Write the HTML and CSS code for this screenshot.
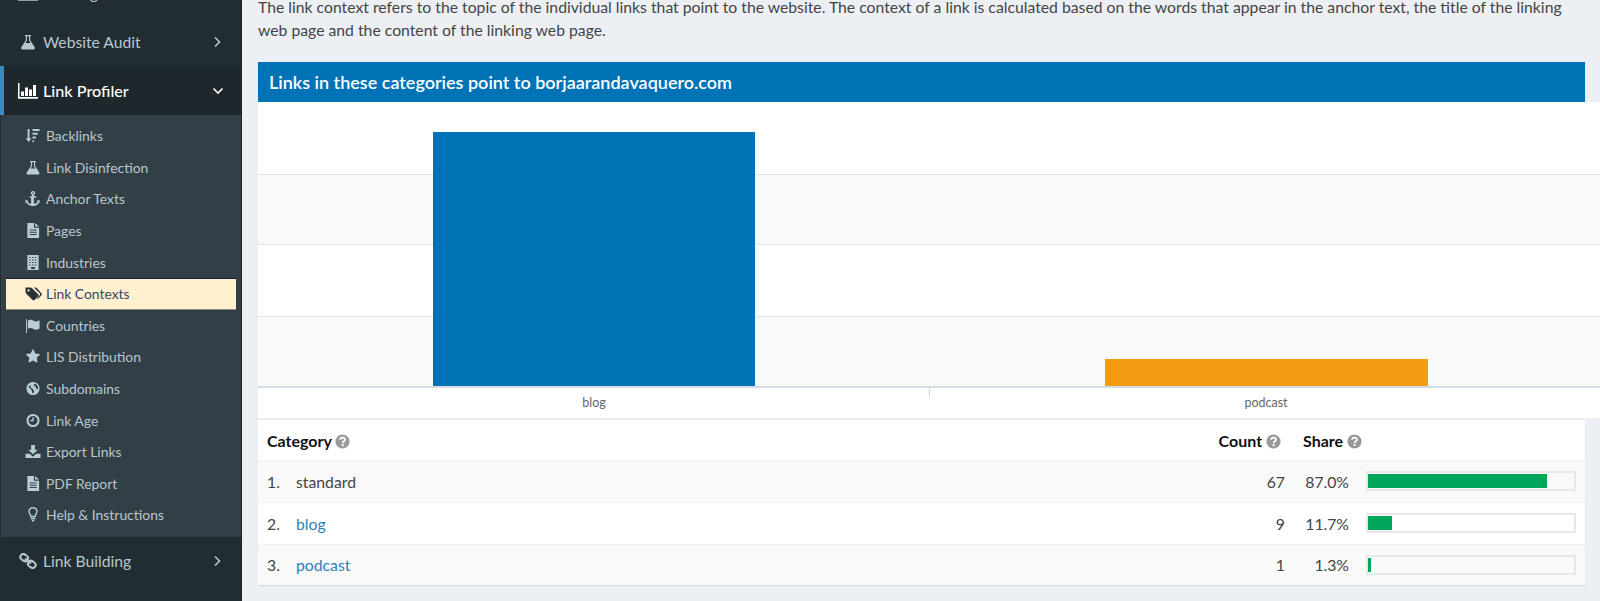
FILE: index.html
```html
<!DOCTYPE html>
<html lang="en">
<head>
    <meta charset="UTF-8">
    <title>Link Contexts</title>
    <link rel="stylesheet" href="styles.css">
</head>
<body>
    <svg class="sprite" width="0" height="0">
        <symbol id="i-flask" viewBox="0 0 16 16"><path fill-rule="evenodd" d="M5 1h6v1.300h-.8v4l4.500 6.900c.6 1 0 2.300-1.200 2.300H2.500c-1.200 0-1.800-1.300-1.200-2.300l4.500-6.900v-4H5zM7 2.300v4.300L5.500 9h5L9 6.600V2.300z"/></symbol>
        <symbol id="i-chart" viewBox="0 0 20 16"><path d="M0 0h1.500v14H20v1.800H0z"/><path d="M3 8.500h3v4.500H3zM7 4.500h3V13H7zM11 6.500h3V13h-3zM15 2h3v11h-3z"/></symbol>
        <symbol id="i-sort" viewBox="0 0 16 16"><path d="M2.300 1h2v10h2L3.300 15 .3 11h2zM7.500 1H15v2.300H7.500zM7.500 5h5.500v2.300H7.500zM7.500 9h3.500v2.300H7.500zM7.500 13H9v2.300H7.500z"/></symbol>
        <symbol id="i-anchor" viewBox="0 0 16 16"><path fill-rule="evenodd" d="M8 0a2.200 2.200 0 0 1 1 4.200V5.500h2.500v1.600H9v6.600c1.700-.2 3.200-1 3.800-2.200l-1.100-.8 3.300-1.300v3.700l-1-.8C13.900 14.500 11.200 16 8 16s-5.900-1.500-7-3.700l-1 .8V9.400l3.300 1.300-1.100.8c.6 1.200 2.100 2 3.800 2.200V7.100H4.500V5.500H7V4.200A2.200 2.200 0 0 1 8 0zm0 1.400a.8.800 0 1 0 0 1.600.8.800 0 0 0 0-1.600z"/></symbol>
        <symbol id="i-file-text" viewBox="0 0 16 16"><path fill-rule="evenodd" d="M2 0h7v5h5.500v11H2zM10.200 0l4.300 3.800h-4.300zM4.500 7v1.100h7.500V7zM4.500 9.400v1.100h7.500V9.400zM4.500 11.800v1.100h7.500v-1.100z"/></symbol>
        <symbol id="i-building" viewBox="0 0 16 16"><path fill-rule="evenodd" d="M2 0h12v16H2zM4 2v1.200h1.500V2zM7 2v1.200h1.500V2zM10 2v1.200h1.500V2zM4 4.700v1.200h1.500V4.700zM7 4.700v1.200h1.500V4.700zM10 4.700v1.200h1.500V4.700zM4 7.400v1.200h1.500V7.400zM7 7.400v1.200h1.500V7.400zM10 7.400v1.200h1.500V7.400zM4 10.100v1.200h1.500v-1.200zM7 10.100v1.200h1.500v-1.200zM10 10.100v1.200h1.500v-1.200zM6 12.800V15h4v-2.200z"/></symbol>
        <symbol id="i-tags" viewBox="0 0 18 16"><path fill-rule="evenodd" d="M.5 1.500h5.300c.6 0 1.200.3 1.700.8l6.500 6.500c.6.600.6 1.500 0 2.100l-3.900 3.900c-.6.600-1.500.6-2.100 0L1.300 8.200C.8 7.700.5 7 .5 6.500zM3.700 3.500a1.200 1.200 0 1 0 0 2.400 1.200 1.200 0 0 0 0-2.400z"/><path d="M9.200 1.500h1.700c.5 0 1.200.3 1.600.7l5 5.600c.6.700.6 1.500 0 2.100l-3.900 4-.9-.9 3.400-3.700c.3-.3.3-.7 0-1L10 2.200c-.2-.3-.5-.7-.8-.7z"/></symbol>
        <symbol id="i-flag" viewBox="0 0 16 16"><path d="M.5 1h1v15h-1zM2.500 3c2-1.700 4-1.200 6 0 2 1 3.700 1.100 6.500-.5v8.700c-2.800 1.700-4.500 1.500-6.500.4-2-1.100-4-1.500-6 .2z"/></symbol>
        <symbol id="i-star" viewBox="0 0 1792 1792"><path d="M1728 647q0 22-26 48l-363 354 86 500q1 7 1 20 0 21-10.500 35.500t-30.500 14.500q-19 0-40-12l-449-236-449 236q-22 12-40 12-21 0-31.500-14.500t-10.500-35.500q0-6 2-20l86-500-364-354q-25-27-25-48 0-37 56-46l502-73 225-455q19-41 49-41t49 41l225 455 502 73q56 9 56 46z"/></symbol>
        <symbol id="i-globe" viewBox="0 0 16 16"><path fill-rule="evenodd" d="M8 1a7 7 0 1 1 0 14A7 7 0 0 1 8 1zM5 4.500L3 6.500l2.200 1.700 1.500 2 .8 3 1.300-.5.200-2.500-2-2.500-1.800-.5.500-1.500zM9.500 3l-1 1.500 2 1 .5 2 2 1.500.5-2-1.500-3z"/></symbol>
        <symbol id="i-clock" viewBox="0 0 16 16"><path fill-rule="evenodd" d="M8 1a7 7 0 1 1 0 14A7 7 0 0 1 8 1zm0 2.200a4.800 4.800 0 1 0 0 9.600 4.800 4.800 0 0 0 0-9.600zM7.300 4.500h1.400v4.300H5V7.500h2.300z"/></symbol>
        <symbol id="i-download" viewBox="0 0 16 16"><path d="M6 1h4v5h3l-5 5-5-5h3z"/><path d="M0 10.500h4.500L8 13.500l3.500-3H16V15H0z"/></symbol>
        <symbol id="i-bulb" viewBox="0 0 16 16"><path fill-rule="evenodd" d="M8 0c2.900 0 5 2 5 4.800 0 2.500-1.800 3.500-2.200 6H5.200C4.800 8.300 3 7.300 3 4.800 3 2 5.100 0 8 0zm0 1.500c-2 0-3.500 1.300-3.500 3.300 0 1.700 1.300 2.500 1.900 4.600h3.200c.6-2.100 1.900-2.900 1.900-4.600 0-2-1.500-3.300-3.500-3.300zM5.500 11.500h5V13h-5zM6.300 13.700h3.400L8.800 15.500H7.200z"/></symbol>
        <symbol id="i-link" viewBox="0 0 18 16"><g fill="none" stroke="currentColor" stroke-width="2"><rect x="1.200" y="1.600" width="8" height="6" rx="3" transform="rotate(35 5.200 4.600)"/><rect x="8.800" y="8.400" width="8" height="6" rx="3" transform="rotate(35 12.800 11.400)"/><path d="M6 5.500l6 5"/></g></symbol>
        <symbol id="i-help" viewBox="0 0 16 16"><circle cx="8" cy="8" r="7.500"/><path d="M5.500 6.200c0-1.500 1.100-2.300 2.500-2.300s2.600.8 2.600 2.100c0 1.800-2.400 1.800-2.400 3.600" fill="none" stroke="#fff" stroke-width="1.900"/><path d="M7 10.700h2.300v2H7z" fill="#fff"/></symbol>
    </svg>

    <div class="app">
        <aside class="sidebar">
            <a class="nav-item clipped"><svg class="nav-icon"><use href="#i-chart"/></svg>Rankings</a>
            <a class="nav-item"><svg class="nav-icon"><use href="#i-flask"/></svg>Website Audit
                <svg class="chevron" viewBox="0 0 10 12"><path d="M3 1.500L7.500 6 3 10.500"/></svg></a>
            <a class="nav-item active"><svg class="nav-icon"><use href="#i-chart"/></svg>Link Profiler
                <svg class="chevron" viewBox="0 0 12 10"><path d="M1.500 2.500L6 7l4.500-4.500"/></svg></a>
            <ul class="submenu">
                <li><svg><use href="#i-sort"/></svg>Backlinks</li>
                <li><svg><use href="#i-flask"/></svg>Link Disinfection</li>
                <li><svg><use href="#i-anchor"/></svg>Anchor Texts</li>
                <li><svg><use href="#i-file-text"/></svg>Pages</li>
                <li><svg><use href="#i-building"/></svg>Industries</li>
                <li class="current"><svg><use href="#i-tags"/></svg>Link Contexts</li>
                <li><svg><use href="#i-flag"/></svg>Countries</li>
                <li><svg><use href="#i-star"/></svg>LIS Distribution</li>
                <li><svg><use href="#i-globe"/></svg>Subdomains</li>
                <li><svg><use href="#i-clock"/></svg>Link Age</li>
                <li><svg><use href="#i-download"/></svg>Export Links</li>
                <li><svg><use href="#i-file-text"/></svg>PDF Report</li>
                <li><svg><use href="#i-bulb"/></svg>Help &amp; Instructions</li>
            </ul>
            <a class="nav-item"><svg class="nav-icon"><use href="#i-link"/></svg>Link Building
                <svg class="chevron" viewBox="0 0 10 12"><path d="M3 1.500L7.500 6 3 10.500"/></svg></a>
        </aside>

        <main class="content">
            <p class="intro">The link context refers to the topic of the individual links that point to the website. The context of a link is calculated based on the words that appear in the anchor text, the title of the linking<br>web page and the content of the linking web page.</p>

            <section class="panel">
                <h2 class="panel-title">Links in these categories point to borjaarandavaquero.com</h2>

                <svg class="chart" width="1342" height="316" viewBox="0 0 1342 316">
                    <rect width="1342" height="316" fill="#fff"/>
                    <rect y="72" width="1342" height="71" fill="#f9f9f9"/>
                    <rect y="214" width="1342" height="70" fill="#f9f9f9"/>
                    <path d="M0 72.500H1342M0 142.500H1342M0 214.500H1342" stroke="#e6e6e6"/>
                    <rect x="175" y="30" width="322" height="254" fill="#0073b7"/>
                    <rect x="847" y="257" width="323" height="27" fill="#f39c12"/>
                    <rect y="284" width="1342" height="2" fill="#d3dde6"/>
                    <rect x="671" y="286" width="1" height="9" fill="#ccd6eb"/>
                    <text x="336" y="305" class="chart-label">blog</text>
                    <text x="1008" y="305" class="chart-label">podcast</text>
                </svg>

                <table class="stats">
                    <thead>
                        <tr>
                            <th class="col-name">Category <svg class="help"><use href="#i-help"/></svg></th>
                            <th class="col-count">Count <svg class="help"><use href="#i-help"/></svg></th>
                            <th class="col-share">Share <svg class="help"><use href="#i-help"/></svg></th>
                            <th class="col-bar"></th>
                        </tr>
                    </thead>
                    <tbody>
                        <tr>
                            <td class="col-name"><span class="rank">1.</span>standard</td>
                            <td class="col-count">67</td>
                            <td class="col-share">87.0%</td>
                            <td class="col-bar"><div class="track"><div class="fill" style="width: 87%"></div></div></td>
                        </tr>
                        <tr>
                            <td class="col-name"><span class="rank">2.</span><a href="#">blog</a></td>
                            <td class="col-count">9</td>
                            <td class="col-share">11.7%</td>
                            <td class="col-bar"><div class="track"><div class="fill" style="width: 11.7%"></div></div></td>
                        </tr>
                        <tr>
                            <td class="col-name"><span class="rank">3.</span><a href="#">podcast</a></td>
                            <td class="col-count">1</td>
                            <td class="col-share">1.3%</td>
                            <td class="col-bar"><div class="track"><div class="fill" style="width: 1.3%"></div></div></td>
                        </tr>
                    </tbody>
                </table>
            </section>
        </main>
    </div>
</body>
</html>
```

FILE: styles.css
```css
html, body {
    margin: 0;
    height: 601px;
    overflow: hidden;
}

body {
    background-color: #ecf0f5;
    font-family: "Lato", "Liberation Sans", sans-serif;
    font-size: 15.75px;
    color: #444444;
}

.sprite {
    display: block;
    position: absolute;
}

.app {
    display: flex;
    height: 601px;
}

.sidebar {
    flex: 0 0 242px;
    background-color: #222d32;
    color: #b8c7ce;
    border-right: 1px solid #1a2226;
    box-sizing: border-box;
}

.nav-item {
    display: flex;
    align-items: center;
    height: 49px;
    padding: 0 19px 0 18px;
    font-size: 15.7px;
    box-sizing: border-box;
}

.nav-item.clipped {
    margin-top: -32px;
}

.nav-item.active {
    background-color: #1e282c;
    border-left: 4px solid #3c8dbc;
    padding-left: 14px;
    color: #ffffff;
    font-size: 16.2px;
    font-weight: 500;
}

.nav-icon {
    width: 20px;
    height: 16px;
    margin-right: 5px;
    fill: currentColor;
    color: inherit;
}

.chevron {
    width: 10px;
    height: 12px;
    margin-left: auto;
    fill: none;
    stroke: currentColor;
    stroke-width: 1.6;
}

.active .chevron {
    width: 12px;
    height: 10px;
    margin-right: -2px;
}

.submenu {
    list-style: none;
    margin: 0 0 0 1px;
    padding: 5px 0 6px;
    background-color: #333f46;
    font-size: 13.9px;
}

.submenu li {
    display: flex;
    align-items: center;
    height: 31.6px;
    padding-left: 24px;
    box-sizing: border-box;
}

.submenu svg {
    width: 16px;
    height: 15px;
    margin-right: 5px;
    fill: #b8cdd8;
}

.submenu .current {
    margin: 0 5px 0 5px;
    padding-left: 19px;
    background-color: #fff1d0;
    border-top: 1px solid #14203a;
    border-bottom: 1px solid #8d8d80;
    color: #3a4660;
}

.submenu .current svg {
    fill: #2b2f38;
    width: 17px;
    margin-right: 4px;
}

.content {
    flex: 1;
    min-width: 0;
    padding: 0 15px 0 16px;
}

.intro {
    margin: -5px 0 21px;
    line-height: 23px;
    white-space: nowrap;
}

.panel {
    background-color: #ffffff;
    box-shadow: 0 1px 1px rgba(0, 0, 0, 0.1);
}

.panel-title {
    margin: 0;
    height: 40px;
    line-height: 41px;
    padding-left: 11px;
    background-color: #0073b7;
    color: #ffffff;
    font-size: 18px;
    font-weight: 600;
}

.chart {
    display: block;
}

.chart-label {
    font-family: "Lato", "Liberation Sans", sans-serif;
    font-size: 12.5px;
    fill: #666666;
    text-anchor: middle;
}

.stats {
    width: 100%;
    border-collapse: collapse;
    table-layout: fixed;
    border-top: 2px solid #e9edf0;
}

.stats th {
    height: 40px;
    padding: 0;
    color: #111111;
    font-size: 16px;
    font-weight: 700;
    text-align: left;
    white-space: nowrap;
}

.stats td {
    height: 40.8px;
    padding: 0;
    border-top: 1px solid #f1f1f1;
}

.stats tbody tr:nth-child(odd) {
    background-color: #f9f9f9;
}

.stats a {
    color: #2d7fc0;
    text-decoration: none;
}

.col-name {
    padding-left: 9px !important;
}

.stats .col-count {
    width: 90px;
    text-align: right;
    box-sizing: border-box;
}

.stats th.col-count {
    padding-right: 4px;
}

.stats th.col-share {
    width: 64px;
    padding-left: 18px;
    box-sizing: border-box;
}

td.col-share {
    text-align: right;
}

.col-bar {
    width: 236px;
}

.rank {
    display: inline-block;
    width: 29px;
}

.help {
    width: 15px;
    height: 15px;
    fill: #999999;
    vertical-align: -2px;
}

.track {
    width: 206px;
    height: 14px;
    margin-left: 17px;
    border: 2px solid #e8e8e8;
    padding: 1px 0;
    box-sizing: content-box;
}

.fill {
    height: 14px;
    background-color: #00a65a;
}
```
